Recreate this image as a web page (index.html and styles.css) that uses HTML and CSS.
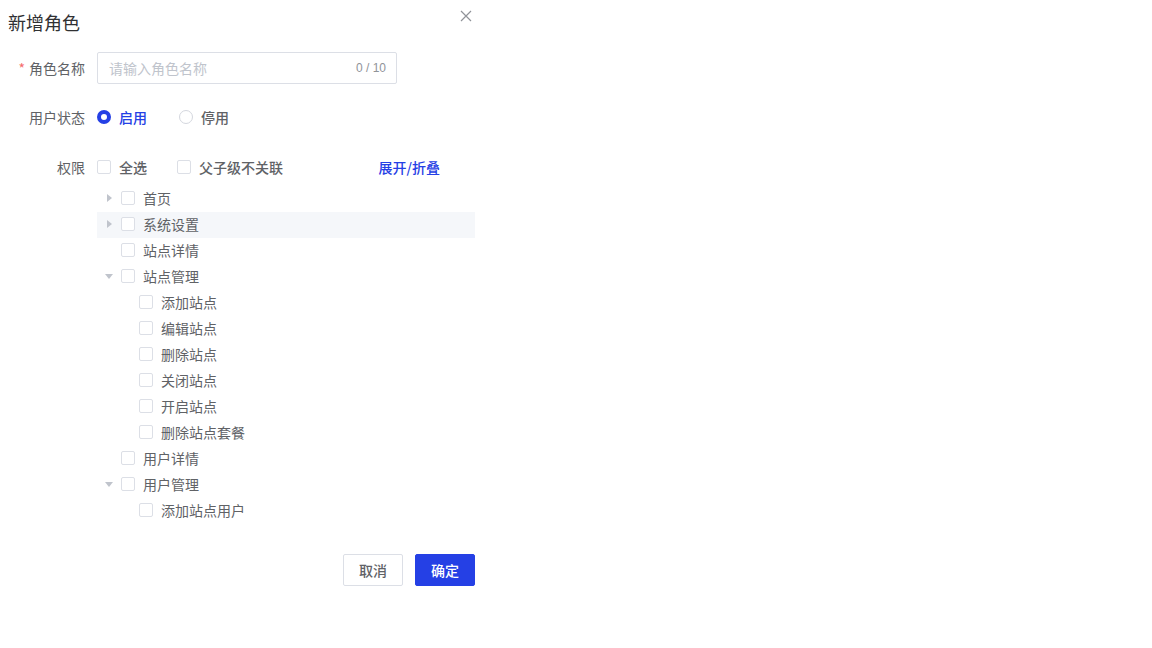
FILE: index.html
```html
<!DOCTYPE html>
<html lang="zh">
<head>
<meta charset="utf-8">
<link rel="stylesheet" href="styles.css">
</head>
<body>
<div class="dialog">
  <div class="header">
    <span class="title">新增角色</span>
    <svg class="close" width="12" height="12" viewBox="0 0 12 12"><path d="M1 1L11 11M11 1L1 11" stroke="#909399" stroke-width="1.2" fill="none"/></svg>
  </div>
  <div class="form">
    <div class="row row-name">
      <label class="label"><span class="req">*</span>角色名称</label>
      <div class="input">
        <span class="placeholder">请输入角色名称</span>
        <span class="count">0 / 10</span>
      </div>
    </div>
    <div class="row row-status">
      <label class="label">用户状态</label>
      <div class="radios">
        <span class="radio checked"><span class="dot"></span><span class="rtext">启用</span></span>
        <span class="radio"><span class="dot"></span><span class="rtext">停用</span></span>
      </div>
    </div>
    <div class="row row-perm">
      <label class="label">权限</label>
      <div class="perm-head">
        <span class="chk"><span class="box"></span><span class="ctext">全选</span></span>
        <span class="chk"><span class="box"></span><span class="ctext">父子级不关联</span></span>
        <span class="link">展开/折叠</span>
      </div>
    </div>
    <div class="tree">
      <div class="node"><span class="arrow right"></span><span class="box"></span><span class="ntext">首页</span></div>
      <div class="node hover"><span class="arrow right"></span><span class="box"></span><span class="ntext">系统设置</span></div>
      <div class="node"><span class="arrow none"></span><span class="box"></span><span class="ntext">站点详情</span></div>
      <div class="node"><span class="arrow down"></span><span class="box"></span><span class="ntext">站点管理</span></div>
      <div class="node l2"><span class="arrow none"></span><span class="box"></span><span class="ntext">添加站点</span></div>
      <div class="node l2"><span class="arrow none"></span><span class="box"></span><span class="ntext">编辑站点</span></div>
      <div class="node l2"><span class="arrow none"></span><span class="box"></span><span class="ntext">删除站点</span></div>
      <div class="node l2"><span class="arrow none"></span><span class="box"></span><span class="ntext">关闭站点</span></div>
      <div class="node l2"><span class="arrow none"></span><span class="box"></span><span class="ntext">开启站点</span></div>
      <div class="node l2"><span class="arrow none"></span><span class="box"></span><span class="ntext">删除站点套餐</span></div>
      <div class="node"><span class="arrow none"></span><span class="box"></span><span class="ntext">用户详情</span></div>
      <div class="node"><span class="arrow down"></span><span class="box"></span><span class="ntext">用户管理</span></div>
      <div class="node l2"><span class="arrow none"></span><span class="box"></span><span class="ntext">添加站点用户</span></div>
    </div>
  </div>
  <div class="footer">
    <button class="btn">取消</button>
    <button class="btn primary">确定</button>
  </div>
</div>
</body>
</html>
```

FILE: styles.css
```css
* { box-sizing: border-box; }
body {
  margin: 0;
  background: #fff;
  font-family: "Noto Sans CJK SC", "Noto Sans", sans-serif;
  font-size: 14px;
  color: #606266;
}
.dialog {
  width: 475px;
}
.header {
  height: 44px;
  padding: 8px 0 0 8px;
  display: flex;
  justify-content: space-between;
  align-items: flex-start;
}
.title {
  font-size: 18px;
  line-height: 28px;
  color: #303133;
}
.close {
  margin: 2px 3px 0 0;
}
.form {
  padding-top: 8px;
}
.row {
  display: flex;
  align-items: center;
  height: 32px;
}
.row-status { margin-top: 17px; }
.row-perm { margin-top: 18px; }
.label {
  width: 97px;
  padding-right: 12px;
  text-align: right;
  color: #606266;
  flex: none;
}
.req { color: #f56c6c; margin-right: 4px; }
.input {
  width: 300px;
  height: 32px;
  border: 1px solid #dcdfe6;
  border-radius: 2px;
  display: flex;
  align-items: center;
  justify-content: space-between;
  padding: 0 10px 0 11px;
}
.placeholder { color: #c0c4cc; }
.count { font-size: 12px; color: #909399; font-family: "Liberation Sans", Arial, sans-serif; }
.radios { display: flex; }
.radio {
  display: inline-flex;
  align-items: center;
  margin-right: 32px;
  font-weight: 500;
}
.radio .dot {
  width: 14px;
  height: 14px;
  border: 1px solid #d4d7de;
  border-radius: 50%;
  margin-right: 8px;
  background: #fff;
}
.radio.checked .dot {
  border: 4px solid #2540e5;
  background: #fff;
}
.radio.checked .rtext { color: #2540e5; }
.perm-head {
  display: flex;
  align-items: center;
  width: 343px;
}
.chk {
  display: inline-flex;
  align-items: center;
  margin-right: 30px;
  font-weight: 500;
}
.box {
  width: 14px;
  height: 14px;
  border: 1px solid #dcdfe6;
  border-radius: 2px;
  background: #fff;
  flex: none;
}
.chk .box { margin-right: 8px; }
.link {
  margin-left: auto;
  color: #2540e5;
  font-weight: 500;
}
.tree {
  margin: 3px 0 0 97px;
  width: 378px;
}
.node {
  height: 26px;
  padding-bottom: 2px;
  display: flex;
  align-items: center;
  color: #606266;
}
.node.hover { background: #f5f7fa; }
.node.l2 { padding-left: 18px; }
.arrow {
  width: 24px;
  height: 24px;
  position: relative;
  flex: none;
}
.arrow.right::after {
  content: "";
  position: absolute;
  left: 10px;
  top: 8px;
  border-left: 5px solid #c0c4cc;
  border-top: 4px solid transparent;
  border-bottom: 4px solid transparent;
}
.arrow.down::after {
  content: "";
  position: absolute;
  left: 8px;
  top: 10px;
  border-top: 5px solid #c0c4cc;
  border-left: 4px solid transparent;
  border-right: 4px solid transparent;
}
.node .box { margin-right: 8px; }
.footer {
  margin-top: 30px;
  display: flex;
  justify-content: flex-end;
  gap: 12px;
}
.btn {
  width: 60px;
  height: 32px;
  border: 1px solid #dcdfe6;
  border-radius: 2px;
  background: #fff;
  color: #606266;
  font-family: inherit;
  font-size: 14px;
  font-weight: 500;
  padding: 0;
}
.btn.primary {
  background: #2540e5;
  border-color: #2540e5;
  color: #fff;
}
```
